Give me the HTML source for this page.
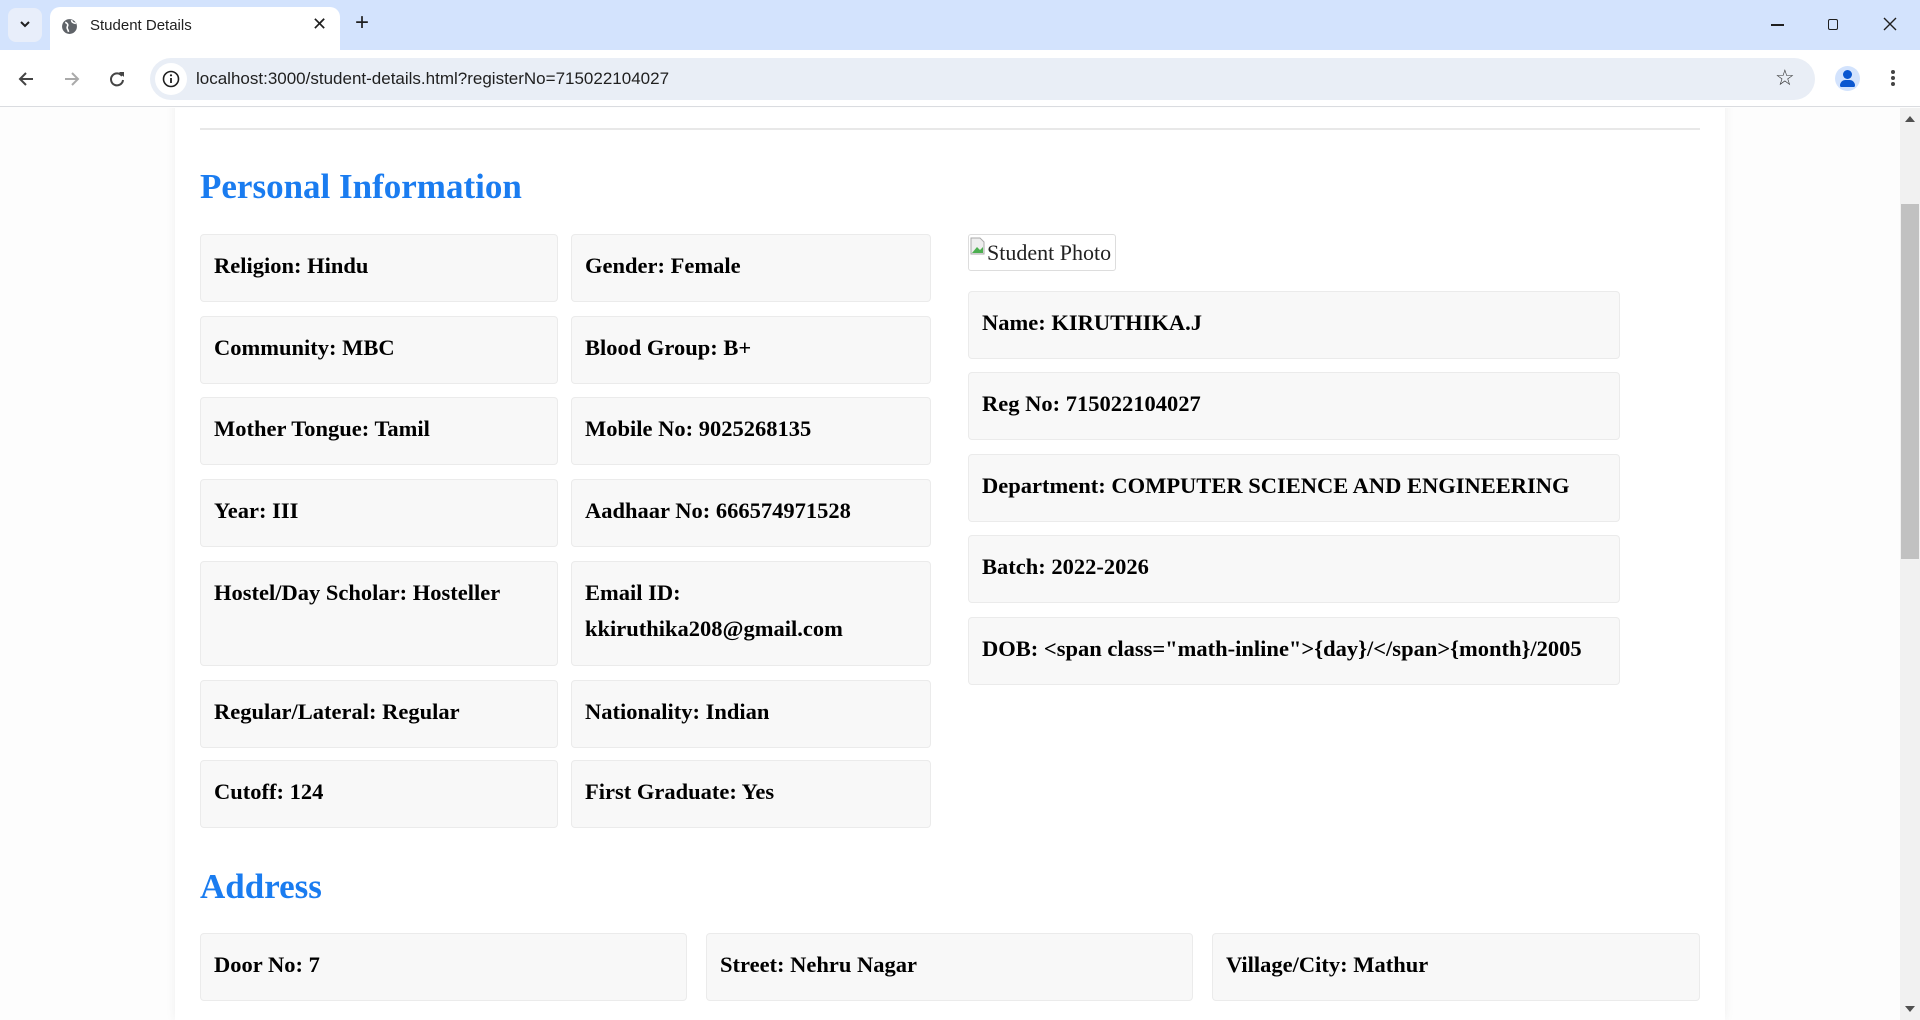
<!DOCTYPE html>
<html><head><meta charset="utf-8"><style>
*{box-sizing:border-box;margin:0;padding:0}
html,body{width:1920px;height:1020px;overflow:hidden}
body{background:#fdfdfd;position:relative;font-family:"Liberation Serif",serif}
.tabbar{position:absolute;left:0;top:0;width:1920px;height:50px;background:#d3e3fd}
.tab{position:absolute;left:50px;top:7px;width:290px;height:43px;background:#fff;border-radius:10px 10px 0 0;font:15px "Liberation Sans",sans-serif;color:#1f1f1f}
.toolbar{position:absolute;left:0;top:50px;width:1920px;height:57px;background:#fff;border-bottom:1px solid #dadce0}
.omni{position:absolute;left:150px;top:8px;width:1665px;height:42px;background:#e9eef6;border-radius:21px;font:17px "Liberation Sans",sans-serif;color:#1f1f1f}
.page{position:absolute;left:0;top:108px;width:1900px;height:912px;overflow:hidden}
.card{position:absolute;left:175px;top:-20px;width:1550px;height:932px;background:#fff;box-shadow:0 0 10px rgba(0,0,0,.06)}
.hr{position:absolute;left:200px;top:20px;width:1500px;height:2px;background:#e8e8e8}
h2{position:absolute;left:200px;font-size:35px;font-weight:bold;color:#1a7cf0;line-height:40px}
.b{position:absolute;background:#f8f8f8;border:1px solid #ebebeb;border-radius:4px;padding:13px 13px;font-size:22.5px;font-weight:bold;line-height:36px;color:#000;height:68px;white-space:nowrap}
.sb{position:absolute;left:1900px;top:108px;width:20px;height:912px;background:#f1f1f1}
</style></head><body>
<div class="tabbar">
 <div style="position:absolute;left:8px;top:8px;width:34px;height:34px;background:#e8eefa;border-radius:8px"></div>
 <svg style="position:absolute;left:18px;top:19px" width="14" height="10"><path d="M3 3l4 4 4-4" stroke="#1f1f1f" stroke-width="2" fill="none"/></svg>
 <div class="tab">
  <svg style="position:absolute;left:11px;top:11px" width="17" height="17" viewBox="0 0 16 16"><circle cx="8" cy="8" r="7" fill="#5f6368"/><path d="M4 4c2 1 3 2 2 4s1 3 1 5M10 2c0 2 2 3 4 3" stroke="#fff" stroke-width="1.5" fill="none"/></svg>
  <span style="position:absolute;left:40px;top:10px">Student Details</span>
  <span style="position:absolute;left:262px;top:7px;font-size:18px">✕</span>
 </div>
 <span style="position:absolute;left:355px;top:9px;font:24px 'Liberation Sans',sans-serif;color:#1f1f1f">+</span>
 <div style="position:absolute;left:1771px;top:24px;width:13px;height:1.5px;background:#1f1f1f"></div>
 <div style="position:absolute;left:1828px;top:19px;width:10px;height:11px;border:1.5px solid #1f1f1f;border-radius:2px"></div>
 <svg style="position:absolute;left:1883px;top:17px" width="14" height="14"><path d="M1 1l12 12M13 1L1 13" stroke="#1f1f1f" stroke-width="1.4"/></svg>
</div>
<div class="toolbar">
 <svg style="position:absolute;left:17px;top:20px" width="18" height="18"><path d="M16 9H3M9 3L3 9l6 6" stroke="#444" stroke-width="2" fill="none"/></svg>
 <svg style="position:absolute;left:63px;top:20px" width="18" height="18"><path d="M2 9h13M9 3l6 6-6 6" stroke="#aaa" stroke-width="2" fill="none"/></svg>
 <svg style="position:absolute;left:108px;top:20px" width="18" height="18"><path d="M14 6A6 6 0 1 0 15 10" stroke="#444" stroke-width="2" fill="none"/><path d="M11 2h5v5z" fill="#444"/></svg>
 <div class="omni">
  <div style="position:absolute;left:5px;top:5px;width:32px;height:32px;border-radius:50%;background:#fff"></div>
  <svg style="position:absolute;left:12px;top:12px" width="18" height="18"><circle cx="9" cy="9" r="7.5" stroke="#1f1f1f" stroke-width="1.6" fill="none"/><path d="M9 8v5" stroke="#1f1f1f" stroke-width="1.8"/><circle cx="9" cy="5.3" r="1.1" fill="#1f1f1f"/></svg>
  <span style="position:absolute;left:46px;top:11px">localhost:3000/student-details.html?registerNo=715022104027</span>
  <span style="position:absolute;left:1625px;top:7px;font-size:22px;color:#333">☆</span>
 </div>
 <div style="position:absolute;left:1835px;top:16px;width:25px;height:25px;border-radius:50%;background:#d3e3fd"></div>
 <div style="position:absolute;left:1843px;top:20px;width:9px;height:9px;border-radius:50%;background:#0b57d0"></div>
 <div style="position:absolute;left:1840px;top:30px;width:15px;height:7px;border-radius:7px 7px 2px 2px;background:#0b57d0"></div>
 <div style="position:absolute;left:1891px;top:20px;width:4px;height:4px;border-radius:50%;background:#444;box-shadow:0 6px 0 #444,0 12px 0 #444"></div>
</div>
<div class="page">
 <div class="card"></div>
 <div class="hr"></div>
 <h2 style="top:59px">Personal Information</h2>
 <div class="b" style="left:200px;top:126px;width:358px">Religion: Hindu</div>
 <div class="b" style="left:571px;top:126px;width:360px">Gender: Female</div>
 <div class="b" style="left:200px;top:208px;width:358px">Community: MBC</div>
 <div class="b" style="left:571px;top:208px;width:360px">Blood Group: B+</div>
 <div class="b" style="left:200px;top:289px;width:358px">Mother Tongue: Tamil</div>
 <div class="b" style="left:571px;top:289px;width:360px">Mobile No: 9025268135</div>
 <div class="b" style="left:200px;top:371px;width:358px">Year: III</div>
 <div class="b" style="left:571px;top:371px;width:360px">Aadhaar No: 666574971528</div>
 <div class="b" style="left:200px;top:453px;width:358px;height:105px">Hostel/Day Scholar: Hosteller</div>
 <div class="b" style="left:571px;top:453px;width:360px;height:105px">Email ID:<br>kkiruthika208@gmail.com</div>
 <div class="b" style="left:200px;top:572px;width:358px">Regular/Lateral: Regular</div>
 <div class="b" style="left:571px;top:572px;width:360px">Nationality: Indian</div>
 <div class="b" style="left:200px;top:652px;width:358px">Cutoff: 124</div>
 <div class="b" style="left:571px;top:652px;width:360px">First Graduate: Yes</div>
 <div style="position:absolute;left:968px;top:126px;width:148px;height:37px;border:1px solid #ddd;border-radius:3px;font-size:22px;line-height:36px;color:#222;padding-left:18px;white-space:nowrap">Student Photo
  <svg style="position:absolute;left:1px;top:2px" width="16" height="18"><path d="M1 1h9l4 4v12H1z" fill="#eee" stroke="#aaa"/><path d="M2 16l5-6 3 3 3-3v6z" fill="#4caf50"/></svg></div>
 <div class="b" style="left:968px;top:183px;width:652px">Name: KIRUTHIKA.J</div>
 <div class="b" style="left:968px;top:264px;width:652px">Reg No: 715022104027</div>
 <div class="b" style="left:968px;top:346px;width:652px">Department: COMPUTER SCIENCE AND ENGINEERING</div>
 <div class="b" style="left:968px;top:427px;width:652px">Batch: 2022-2026</div>
 <div class="b" style="left:968px;top:509px;width:652px">DOB: &lt;span class="math-inline"&gt;{day}/&lt;/span&gt;{month}/2005</div>
 <h2 style="top:759px">Address</h2>
 <div class="b" style="left:200px;top:825px;width:487px">Door No: 7</div>
 <div class="b" style="left:706px;top:825px;width:487px">Street: Nehru Nagar</div>
 <div class="b" style="left:1212px;top:825px;width:488px">Village/City: Mathur</div>
</div>
<div class="sb">
 <svg style="position:absolute;left:5px;top:8px" width="10" height="6"><path d="M0 6L5 0l5 6z" fill="#505050"/></svg>
 <div style="position:absolute;left:1px;top:96px;width:18px;height:355px;background:#c1c1c1"></div>
 <svg style="position:absolute;left:5px;top:898px" width="10" height="6"><path d="M0 0h10L5 6z" fill="#505050"/></svg>
</div>
</body></html>
